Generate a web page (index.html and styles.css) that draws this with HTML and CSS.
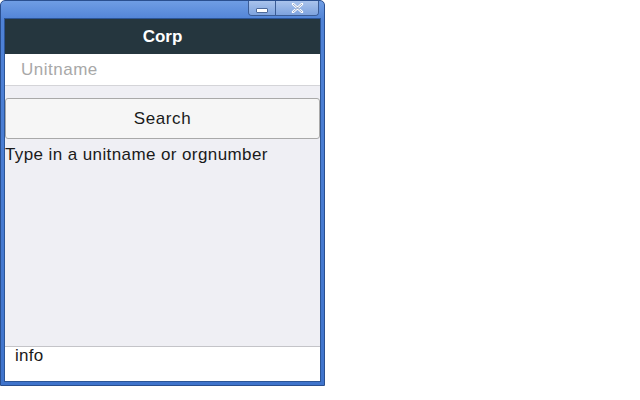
FILE: index.html
```html
<!DOCTYPE html>
<html>
<head>
<meta charset="utf-8">
<link rel="stylesheet" href="styles.css">
</head>
<body>
<div class="window">
  <div class="titlebar">
    <div class="caption-buttons">
      <div class="cap-btn min"><span class="min-glyph"></span></div>
      <div class="cap-btn close">
        <svg width="13" height="10" viewBox="0 0 13 10"><path d="M2 1 L11 9 M11 1 L2 9" stroke="#ffffff" stroke-width="2.4" stroke-linecap="round"/><path d="M2 1 L11 9 M11 1 L2 9" stroke="#4e6a9a" stroke-width="0.6" fill="none"/></svg>
      </div>
    </div>
  </div>
  <div class="client">
    <div class="header">Corp</div>
    <div class="search-field"><span class="placeholder">Unitname</span></div>
    <div class="search-btn">Search</div>
    <div class="hint">Type in a unitname or orgnumber</div>
    <div class="spacer"></div>
    <div class="footer">info</div>
  </div>
</div>
</body>
</html>
```
FILE: styles.css
```css
body {
  margin: 0;
  background: #ffffff;
  font-family: "Liberation Sans", Arial, sans-serif;
}
.window {
  width: 325px;
  height: 386px;
  box-sizing: border-box;
  background: linear-gradient(#6f9de4, #4f82d6 20px, #3f74cc);
  border: 1px solid #2a4f8f;
  border-radius: 5px 5px 0 0;
  padding: 0 3px 3px 3px;
  display: flex;
  flex-direction: column;
}
.titlebar {
  height: 17px;
  display: flex;
  justify-content: flex-end;
  padding-right: 2px;
}
.caption-buttons {
  display: flex;
  height: 14px;
  border: 1px solid #3b5c95;
  border-top: none;
  border-radius: 0 0 4px 4px;
  overflow: hidden;
}
.cap-btn {
  height: 14px;
  display: flex;
  align-items: center;
  justify-content: center;
  background: linear-gradient(#a9c3ec, #7ea3de);
}
.cap-btn.min {
  width: 26px;
  border-right: 1px solid #3b5c95;
}
.cap-btn.close {
  width: 42px;
}
.min-glyph {
  width: 10px;
  height: 3px;
  background: #ffffff;
  border: 1px solid #4e6a9a;
  border-radius: 1px;
  margin-top: 4px;
}
.client {
  flex: 1;
  background: #efeff4;
  display: flex;
  flex-direction: column;
  border: 1px solid #2c5596;
  font-size: 17px;
  letter-spacing: 0.25px;
}
.header {
  height: 35px;
  background: #25363e;
  color: #ffffff;
  font-weight: bold;
  font-size: 17px;
  letter-spacing: 0;
  display: flex;
  align-items: center;
  justify-content: center;
}
.search-field {
  height: 31px;
  background: #ffffff;
  border-bottom: 1px solid #d4d4d8;
  display: flex;
  align-items: center;
  padding-left: 16px;
}
.placeholder {
  color: #a8a8a8;
  letter-spacing: 0.5px;
}
.search-btn {
  margin-top: 12px;
  height: 39px;
  background: #f6f6f6;
  border: 1px solid #a9a9a9;
  border-radius: 3px;
  display: flex;
  align-items: center;
  justify-content: center;
  color: #1a1a1a;
  letter-spacing: 0.6px;
}
.hint {
  color: #1a1a1a;
  margin-top: 6px;
  line-height: 20px;
  letter-spacing: 0.4px;
}
.spacer {
  flex: 1;
}
.footer {
  height: 34px;
  background: #ffffff;
  border-top: 1px solid #c4c4c8;
  color: #1a1a1a;
  padding-left: 10px;
  line-height: 18px;
}
```
